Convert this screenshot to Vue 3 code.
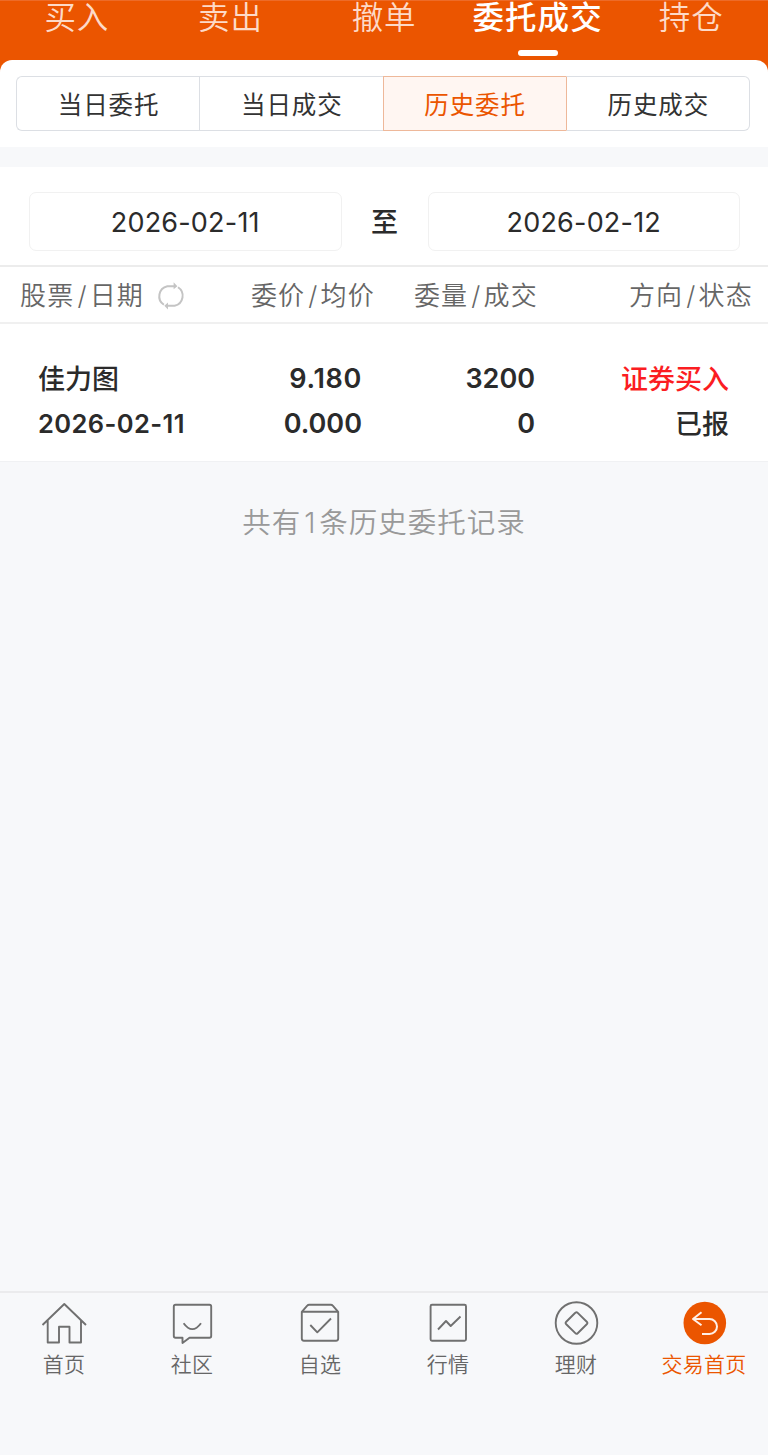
<template>
  <div class="page">
    <header class="top">
      <nav class="tabs">
        <span
          v-for="tab in tabs"
          :key="tab"
          class="tab"
          :class="{ active: tab === activeTab }"
          @click="activeTab = tab"
        >{{ tab }}</span>
      </nav>
    </header>

    <div class="panel-wrap">
      <div class="panel">
        <div class="segment">
          <button
            v-for="s in segments"
            :key="s"
            class="segment-item"
            :class="{ active: s === activeSegment }"
            @click="activeSegment = s"
          >{{ s }}</button>
        </div>
      </div>
    </div>

    <section class="dates">
      <div class="date">{{ from }}</div>
      <span class="to">至</span>
      <div class="date">{{ to }}</div>
    </section>

    <div class="row head">
      <div class="col name">
        <span>股票<i>/</i>日期</span>
        <svg class="refresh" viewBox="0 0 28 28">
          <path d="M7.4 22.2A9.6 9.6 0 0 1 10.6 4.8H18M20.6 5.8A9.6 9.6 0 0 1 17.4 23.2H10" />
          <path class="tip" d="M16.5 1.2L20 4.8L16.5 7.8ZM11.2 20L7.8 23.2L11.2 26.6Z" />
        </svg>
      </div>
      <div class="col price">委价<i>/</i>均价</div>
      <div class="col amount">委量<i>/</i>成交</div>
      <div class="col state">方向<i>/</i>状态</div>
    </div>

    <div v-for="o in orders" :key="o.name" class="row order">
      <div class="col name">
        <div>{{ o.name }}</div>
        <div class="day">{{ o.date }}</div>
      </div>
      <div class="col price">
        <div class="ask">{{ o.price }}</div>
        <div>{{ o.avg }}</div>
      </div>
      <div class="col amount">
        <div>{{ o.amount }}</div>
        <div>{{ o.done }}</div>
      </div>
      <div class="col state">
        <div class="buy">{{ o.side }}</div>
        <div>{{ o.state }}</div>
      </div>
    </div>

    <p class="total">共有<i>{{ orders.length }}</i>条历史委托记录</p>

    <footer class="bar">
      <a class="bar-item">
        <svg viewBox="0 0 48 48">
          <path d="M2.5 25L24.3 4L46 25M7.7 20.5V42.5H19V26.7H29.5V42.5H41V20.5" />
        </svg>
        <span>首页</span>
      </a>
      <a class="bar-item">
        <svg viewBox="0 0 48 48">
          <path d="M7.5 4.8H41.5Q43.2 4.8 43.2 6.5V36Q43.2 37.7 41.5 37.7H21.5L14.5 43V37.7H7.5Q5.8 37.7 5.8 36V6.5Q5.8 4.8 7.5 4.8ZM15.6 23.2Q24.3 35 33 23.2" />
        </svg>
        <span>社区</span>
      </a>
      <a class="bar-item">
        <svg viewBox="0 0 48 48">
          <path d="M5.8 11.8L11 5.8Q12 4.8 13.2 4.8H34.8Q36 4.8 37 5.8L42.2 11.8V38.5Q42.2 40.7 40 40.7H8Q5.8 40.7 5.8 38.5ZM5.8 11.8H42.2M14.3 25L21.3 32.3L35 18.5" />
        </svg>
        <span>自选</span>
      </a>
      <a class="bar-item">
        <svg viewBox="0 0 48 48">
          <path d="M8 4.8H40.5Q42 4.8 42 6.3V39.2Q42 40.7 40.5 40.7H8Q6.6 40.7 6.6 39.2V6.3Q6.6 4.8 8 4.8ZM14 29.5L22 21L26.7 26L36.5 16.5" />
        </svg>
        <span>行情</span>
      </a>
      <a class="bar-item">
        <svg viewBox="0 0 48 48">
          <circle cx="24.5" cy="23" r="20.8" />
          <path d="M23.3 12.8Q24.5 11.6 25.7 12.8L35 22Q36 23 35 24L25.7 33.2Q24.5 34.4 23.3 33.2L14 24Q13 23 14 22Z" />
        </svg>
        <span>理财</span>
      </a>
      <a class="bar-item current">
        <svg viewBox="0 0 48 48">
          <circle class="disc" cx="24.8" cy="23" r="21.3" />
          <path class="back" d="M21.5 12.2L13 19L21.5 25.2M13 19H29.5A7.5 7.5 0 0 1 29.5 34H22" />
        </svg>
        <span>交易首页</span>
      </a>
    </footer>
  </div>
</template>

<script setup>
  import { ref } from 'vue'

  const tabs = ['买入', '卖出', '撤单', '委托成交', '持仓']
  const activeTab = ref('委托成交')

  const segments = ['当日委托', '当日成交', '历史委托', '历史成交']
  const activeSegment = ref('历史委托')

  const from = ref('2026-02-11')
  const to = ref('2026-02-12')

  const orders = ref([
    {
      name: '佳力图',
      date: '2026-02-11',
      price: '9.180',
      avg: '0.000',
      amount: '3200',
      done: '0',
      side: '证券买入',
      state: '已报'
    }
  ])
</script>

<style>
  body {
    background: #f7f8fa;
  }
</style>

<style scoped>
  .page {
    box-sizing: border-box;
    height: 1455px;
    display: flex;
    flex-direction: column;
    background: #f7f8fa;
    color: #2b2b2b;
    font-family: Inter, "Noto Sans CJK SC", sans-serif;
  }
  i {
    font-style: normal;
  }
  .top {
    height: 60px;
    flex-shrink: 0;
    background: #eb5500;
    border-top: 1px solid #ed6b28;
    box-sizing: border-box;
  }
  .tabs {
    display: flex;
  }
  .tab {
    flex: 1 0 0;
    height: 59px;
    display: flex;
    flex-direction: column;
    align-items: center;
    font-size: 31.5px;
    line-height: 34px;
    letter-spacing: .8px;
    font-weight: 350;
    white-space: nowrap;
    color: #fddac8;
  }
  .tab.active {
    font-weight: 500;
    letter-spacing: 1.1px;
    color: #fff;
  }
  .tab.active::after {
    content: '';
    width: 40px;
    height: 6px;
    margin-top: 15px;
    border-radius: 3px;
    background: #fff;
  }
  .panel-wrap {
    flex-shrink: 0;
    background: #eb5500;
  }
  .panel {
    box-sizing: border-box;
    height: 87px;
    padding: 16px 18px 0 16px;
    border-radius: 12px 12px 0 0;
    background: #fff;
  }
  .segment {
    display: flex;
    height: 55px;
  }
  .segment-item {
    flex: 1 0 0;
    margin: 0;
    padding: 0 0 0 1px;
    border: 1px solid #dcdfe4;
    border-right-width: 0;
    background: #fff;
    color: #333;
    font-family: inherit;
    font-size: 24.5px;
    letter-spacing: .9px;
  }
  .segment-item:first-child {
    border-radius: 6px 0 0 6px;
  }
  .segment-item:last-child {
    border-right-width: 1px;
    border-radius: 0 6px 6px 0;
  }
  .segment-item.active {
    border-color: #eeb89a;
    background: #fff6f2;
    color: #eb5500;
  }
  .segment-item.active + .segment-item {
    border-left-color: #eeb89a;
  }
  .dates {
    box-sizing: border-box;
    height: 98px;
    flex-shrink: 0;
    margin-top: 20px;
    padding: 25px 28px 0 29px;
    display: flex;
    background: #fff;
  }
  .date {
    box-sizing: border-box;
    flex: 1 0 0;
    height: 59px;
    border: 1px solid #f1f1f1;
    border-radius: 7px;
    font-size: 27px;
    line-height: 59px;
    letter-spacing: .2px;
    text-align: center;
  }
  .to {
    width: 86px;
    font-size: 27px;
    line-height: 62px;
    font-weight: 500;
    text-align: center;
  }
  .row {
    box-sizing: border-box;
    flex-shrink: 0;
    display: flex;
    background: #fff;
  }
  .col {
    text-align: right;
    white-space: nowrap;
  }
  .head {
    height: 59px;
    padding: 0 15px 0 20px;
    border-top: 2px solid #ececec;
    border-bottom: 2px solid #f0f0f0;
    color: #666;
    font-size: 26px;
    line-height: 57px;
    letter-spacing: 1.2px;
    font-weight: 350;
  }
  .head i {
    margin: 0 2px 0 3px;
  }
  .head .name {
    width: 166px;
    height: 57px;
    display: flex;
    align-items: center;
  }
  .refresh {
    width: 30px;
    height: 30px;
    margin-left: 12px;
    fill: none;
    stroke: #c4c4c4;
    stroke-width: 1.9;
  }
  .refresh .tip {
    fill: #c4c4c4;
    stroke: none;
  }
  .head .price {
    width: 189px;
  }
  .head .amount {
    width: 163px;
  }
  .head .state {
    flex: 1;
  }
  .order {
    height: 138px;
    padding: 32px 39px 0 38px;
    border-bottom: 1px solid #f0f1f3;
    font-size: 27px;
    line-height: 45px;
    font-weight: 600;
  }
  .order .col > div {
    height: 45px;
  }
  .order .name {
    width: 160px;
    text-align: left;
  }
  .order .name,
  .order .state {
    font-weight: 500;
    line-height: 47px;
  }
  .order .day {
    font-size: 25.5px;
    line-height: 45px;
    letter-spacing: .4px;
    font-weight: 600;
  }
  .order .price {
    width: 164px;
  }
  .order .ask {
    letter-spacing: .7px;
  }
  .order .amount {
    width: 173px;
  }
  .order .state {
    flex: 1;
  }
  .order .buy {
    color: #fb1d22;
  }
  .total {
    margin: 40px 0 0;
    color: #999;
    font-size: 28.5px;
    line-height: 42px;
    letter-spacing: 1px;
    font-weight: 350;
    text-align: center;
  }
  .total i {
    margin: 0 3px;
  }
  .bar {
    box-sizing: border-box;
    height: 164px;
    margin-top: auto;
    border-top: 2px solid #ebebed;
    display: flex;
  }
  .bar-item {
    flex: 1 0 0;
    padding-top: 7px;
    display: flex;
    flex-direction: column;
    align-items: center;
    color: #666;
    font-size: 21px;
    line-height: 28px;
    letter-spacing: .2px;
    font-weight: 350;
  }
  .bar-item svg {
    width: 48px;
    height: 48px;
    margin-bottom: 3px;
    fill: none;
    stroke: #707070;
    stroke-width: 1.9;
    stroke-linejoin: round;
  }
  .current {
    color: #eb5500;
  }
  .bar-item .disc {
    fill: #eb5500;
    stroke: none;
  }
  .bar-item .back {
    stroke: #fff0e8;
    stroke-width: 2;
  }
</style>
